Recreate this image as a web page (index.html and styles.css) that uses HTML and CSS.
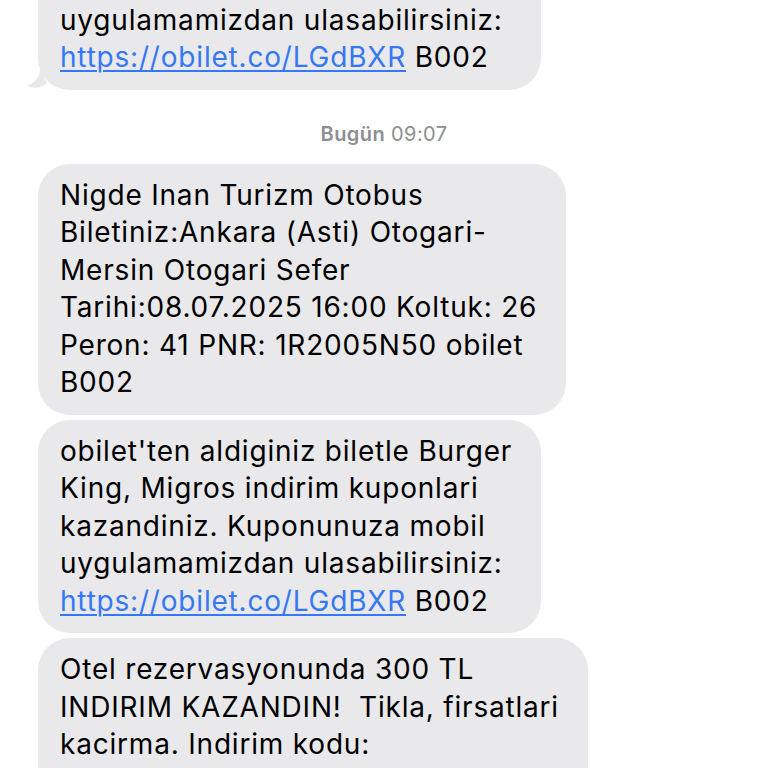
FILE: index.html
```html
<!DOCTYPE html>
<html lang="tr">
<head>
<meta charset="utf-8">
<link rel="stylesheet" href="styles.css">
</head>
<body>
<div class="thread">
  <div class="bubble tail">obilet'ten aldiginiz biletle Burger<br>King, Migros indirim kuponlari<br>kazandiniz. Kuponunuza mobil<br>uygulamamizdan ulasabilirsiniz:<br><a class="link" href="#">https://obilet.co/LGdBXR</a> B002
    <svg class="tail-svg" width="20" height="22" viewBox="0 0 20 22"><path d="M13 0 C13 9 9 14 0 18 C7 21 14 20 20 15 Z" fill="#e9e9eb"/></svg>
  </div>
  <div class="stamp"><b>Bugün</b> 09:07</div>
  <div class="bubble">Nigde Inan Turizm Otobus<br>Biletiniz:Ankara (Asti) Otogari-<br>Mersin Otogari Sefer<br>Tarihi:08.07.2025 16:00 Koltuk: 26<br>Peron: 41 PNR: 1R2005N50 obilet<br>B002</div>
  <div class="bubble">obilet'ten aldiginiz biletle Burger<br>King, Migros indirim kuponlari<br>kazandiniz. Kuponunuza mobil<br>uygulamamizdan ulasabilirsiniz:<br><a class="link" href="#">https://obilet.co/LGdBXR</a> B002</div>
  <div class="bubble">Otel rezervasyonunda 300 TL<br>INDIRIM KAZANDIN!&nbsp; Tikla, firsatlari<br>kacirma. Indirim kodu:<br>OBILET300 B002</div>
</div>
</body>
</html>
```
FILE: styles.css
```css
html, body { margin: 0; padding: 0; background: #fff; }
body { width: 768px; height: 768px; overflow: hidden; font-family: Inter, "Noto Sans", sans-serif; }
.thread { display: flex; flex-direction: column; align-items: flex-start; margin-top: -124px; }
.bubble {
  position: relative;
  margin-left: 38px;
  background: #e9e9eb;
  color: #000;
  border-radius: 32px;
  padding: 13px 29px 13px 22px;
  font-size: 28px;
  letter-spacing: 0.8px;
  line-height: 37.5px;
  white-space: nowrap;
  margin-bottom: 5px;
}
.bubble.tail { margin-bottom: 0; }
.tail-svg { position: absolute; left: -11px; bottom: 0; }
.link { color: #3478f6; text-decoration: underline; text-decoration-thickness: 2px; text-underline-offset: 3px; }
.stamp {
  align-self: center;
  margin: 32px 0 18px 0;
  font-size: 20px;
  letter-spacing: 0.4px;
  line-height: 24px;
  color: #8e8e93;
}
.stamp b { font-weight: 600; }
```
